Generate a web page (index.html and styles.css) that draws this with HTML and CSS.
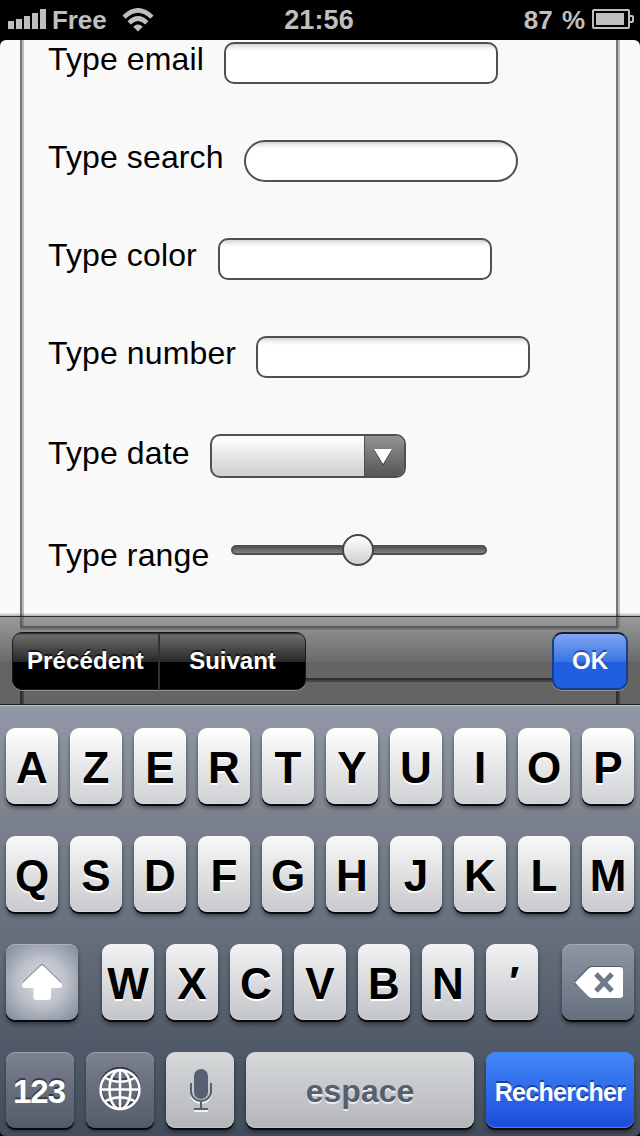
FILE: index.html
```html
<!DOCTYPE html>
<html lang="fr">
<head>
<meta charset="utf-8">
<title>Formulaire</title>
<link rel="stylesheet" href="styles.css">
</head>
<body>
<div class="phone">
  <header class="status">
    <div class="carrier">
      <svg class="signal" width="38" height="20" viewBox="0 0 38 20"><path d="M0 12h6v8H0zM8 10h6v10H8zM16 7h6v13h-6zM24 4h6v16h-6zM32 0h6v20h-6z"/></svg>
      <span class="network">Free</span>
      <svg class="wifi" width="32" height="24" viewBox="0 0 32 24"><g fill="none" stroke="#bfbfbf" stroke-width="4.6"><path d="M2 9.2Q16-4.4 30 9.2"/><path d="M7.2 14.8Q16 6.2 24.8 14.8"/></g><path d="M11.2 18.8Q16 14.4 20.8 18.8L16 23.6z"/></svg>
    </div>
    <div class="time">21:56</div>
    <div class="power"><span>87 %</span>
      <svg width="42" height="20" viewBox="0 0 42 20"><path fill="none" stroke="#bfbfbf" stroke-width="2" d="M2 1h34q1 0 1 1v16q0 1-1 1H2q-1 0-1-1V2q0-1 1-1zM37 7h3q1 0 1 1v4q0 1-1 1h-3"/><path d="M4 4h28v12H4z"/></svg>
    </div>
  </header>
  <main class="page">
    <section class="group first">
      <div class="row"><label class="w-email">Type email</label><span class="field"></span></div>
      <div class="row"><label class="w-search">Type search</label><span class="field round"></span></div>
      <div class="row"><label class="w-color">Type color</label><span class="field"></span></div>
      <div class="row"><label class="w-number">Type number</label><span class="field"></span></div>
      <div class="row date"><label class="w-date">Type date</label><span class="select"><span class="arrow"><svg width="20" height="18" viewBox="0 0 20 18"><path fill="#444" d="M1 2h18l-9 16z"/><path fill="#fff" d="M1 1h18l-9 15z"/></svg></span></span></div>
      <div class="row range"><label class="w-range">Type range</label><span class="track"><span class="thumb"></span></span></div>
    </section>
    <section class="group second"></section>
    <nav class="assist">
      <div class="segments"><span class="seg prev">Précédent</span><span class="seg next">Suivant</span></div>
      <span class="ok">OK</span>
    </nav>
  </main>
  <section class="keyboard">
    <div class="keys"><b class="key">A</b><b class="key">Z</b><b class="key">E</b><b class="key">R</b><b class="key">T</b><b class="key">Y</b><b class="key">U</b><b class="key">I</b><b class="key">O</b><b class="key">P</b></div>
    <div class="keys two"><b class="key">Q</b><b class="key">S</b><b class="key">D</b><b class="key">F</b><b class="key">G</b><b class="key">H</b><b class="key">J</b><b class="key">K</b><b class="key">L</b><b class="key">M</b></div>
    <div class="keys three">
      <b class="key shift"><svg width="42" height="38" viewBox="0 0 42 38"><path fill="#8d919b" d="M21 1Q22 1 23 2L40 18.500V22H2V18.500L19 2Q20 1 21 1z"/><path fill="#fff" d="M21 2.500Q22 2.500 23 3.500L40 20Q42 22 40.500 24 40 25 37 25H30v8.500q0 3.500-3 3.500H15.500q-3 0-3-3.500V25H5Q2 25 1.500 24 0 22 2 20L19 3.500Q20 2.500 21 2.500z"/></svg></b>
      <b class="key">W</b><b class="key">X</b><b class="key">C</b><b class="key">V</b><b class="key">B</b><b class="key">N</b><b class="key quote">′</b>
      <b class="key delete"><svg width="50" height="34" viewBox="0 0 50 34"><path fill="#555c6a" d="M1 16L14 2Q16 1 18 1H46Q49 1 49 4V20H1z"/><path fill="#fff" d="M1 17.500L14 4Q16 2 18 2H46Q49 2 49 5V30Q49 33 46 33H18Q16 33 14 31z"/><path fill="none" stroke="#70798a" stroke-width="5" d="M22 9l16 17M38 9L22 26"/></svg></b>
    </div>
    <div class="keys four">
      <b class="key dark">123</b>
      <b class="key dark globe"><svg width="42" height="44" viewBox="0 0 42 44"><g fill="none" stroke="#343b49" stroke-width="2.500"><circle cx="21" cy="20.500" r="19.500"/><path d="M7 9q14 8 28 0"/></g><g fill="none" stroke="#fff" stroke-width="2.500"><circle cx="21" cy="22.500" r="19.500"/><ellipse cx="21" cy="22.500" rx="10.500" ry="19.500"/><path d="M21 3v39M1.500 22.500h39M6.500 11q14.500 7.500 29 0M6.500 34q14.500-7.500 29 0"/></g></svg></b>
      <b class="key mic"><svg width="24" height="44" viewBox="0 0 24 44"><g transform="translate(0 2)" fill="none" stroke="#f3f3f3" stroke-width="2"><path d="M2 14v8.500a10 9.500 0 0 0 20 0V14M12 32v8M5 40h14"/></g><rect x="5" y="0" width="14" height="30" rx="7" fill="#556070"/><path fill="none" stroke="#556070" stroke-width="2" d="M2 14v8.500a10 9.500 0 0 0 20 0V14M12 32v8M5 40h14"/></svg></b>
      <b class="key space">espace</b>
      <b class="key go">Rechercher</b>
    </div>
  </section>
</div>
</body>
</html>
```
FILE: styles.css
```css
* { box-sizing: border-box; }
body { margin: 0; background: #000; font-family: "Liberation Sans", Arial, Helvetica, sans-serif; }
.phone { width: 640px; height: 1136px; overflow: hidden; background: #000; display: flex; flex-direction: column; border-radius: 0 0 5px 5px; }
svg { display: block; flex: none; }

.status { height: 40px; flex: none; display: grid; grid-template-columns: 1fr auto 1fr; color: #bfbfbf; font-weight: bold; font-size: 26px; line-height: 40px; }
.status svg { fill: #bfbfbf; }
.carrier { display: flex; padding-left: 8px; }
.signal { margin-top: 9px; }
.network { margin-left: 6px; width: 56px; letter-spacing: -.1px; }
.wifi { margin: 8px 0 0 14px; }
.time { font-size: 27px; letter-spacing: .1px; padding-right: 2px; }
.power { display: flex; justify-content: flex-end; padding-right: 6px; gap: 7px; white-space: nowrap; }
.power span { word-spacing: 2px; }
.power svg { margin-top: 9px; }

.page { height: 665px; flex: none; position: relative; overflow: hidden; background: #f9f9f9; border-radius: 6px 6px 0 0; padding: 0 20px; }
.group { border: 2px solid #757575; box-shadow: inset 2px 0 #bcbcbc, 2px 0 #bcbcbc, 0 2px #bcbcbc; width: 598px; }
.first { height: 588px; border-top: 0; padding: 2px 26px 0; }
.second { height: 60px; margin-top: 50px; box-shadow: inset 2px 2px #aaa, 2px 0 #aaa; }
.row { height: 98px; display: flex; align-items: flex-start; }
.row label { flex: none; font-size: 32px; line-height: 34px; letter-spacing: .12px; color: #000; white-space: nowrap; }
.w-email { width: 176px; }
.w-search { width: 196px; }
.w-color { width: 170px; }
.w-number { width: 208px; }
.w-date { width: 162px; }
.w-range { width: 183px; }
.field { width: 274px; height: 42px; border: 2px solid #505050; border-radius: 10px; background: linear-gradient(#d4d4d4, #f3f3f3 4px, #fff 7px); }
.round { border-radius: 21px; }
.date label { margin-top: 2px; }
.select { width: 196px; height: 44px; border: 2px solid #505050; border-radius: 10px; overflow: hidden; background: linear-gradient(#fff, #cfcfcf); display: flex; justify-content: flex-end; }
.arrow { width: 40px; border-left: 1px solid #505050; background: linear-gradient(#929292, #565656); padding: 12px 0 0 8px; }
.range label { margin-top: 6px; }
.track { width: 256px; height: 10px; margin-top: 13px; border-radius: 5px; border: 2px solid #505050; background: linear-gradient(#555, #808284); display: flex; align-items: center; justify-content: center; }
.thumb { width: 32px; height: 32px; flex: none; border: 2px solid #444; border-radius: 50%; background: linear-gradient(#fff, #d0d0d0); margin-right: 2px; }

.assist { position: absolute; left: 0; right: 0; bottom: 0; height: 92px; display: flex; justify-content: space-between; padding: 19px 12px 15px; background: linear-gradient(rgba(0,0,0,.03), rgba(0,0,0,.3) 3px, #292929 3px, #292929 4px, rgba(90,90,90,.6) 4px, rgba(12,12,12,.6) 49px, rgba(0,0,0,.6) 49px, rgba(0,0,0,.6) 91px, #222 91px); }
.segments { display: flex; width: 294px; height: 58px; border-radius: 10px; border: 1px solid #181818; background: linear-gradient(#222 0, #6b6b6b 2px, #272727 29px, #000 29px); box-shadow: 0 1px #969696; }
.seg { color: #fff; font-weight: bold; font-size: 24px; line-height: 56px; text-align: center; text-shadow: 0 -2px rgba(0,0,0,.65); }
.prev { width: 147px; letter-spacing: .1px; border-right: 2px solid #333; }
.next { flex: 1; }
.ok { width: 76px; height: 58px; border-radius: 10px; border: 2px solid #183d8c; border-top-color: #171d2d; color: #fff; font-size: 24px; line-height: 54px; font-weight: bold; text-align: center; text-shadow: 0 -2px #2450ab; background: linear-gradient(#7ea5f4, #3974e1 28px, #2060df 28px); box-shadow: 0 1px #969696; }

.keyboard { flex: 1; background: linear-gradient(#c0c5ce 0, #9299a6 2px, #7c818e 115px, #67717e 220px, #505967 340px, #434c5b); padding: 23px 6px 0; display: flex; flex-direction: column; gap: 32px; }
.keys { display: flex; justify-content: space-between; height: 76px; flex: none; }
.key { width: 52px; height: 76px; flex: none; border-radius: 9px; font-size: 44px; line-height: 79px; color: #000; text-align: center; text-shadow: 0 2px #fff; background: linear-gradient(#fff, #cfd0d3); box-shadow: 0 2px 0 #080a0d, 0 4px 4px rgba(0,0,0,.45), inset 0 -1px rgba(255,255,255,.25); display: flex; justify-content: center; }
.two .key { background: linear-gradient(#f8f8f9, #c9cacd); }
.three, .four { justify-content: flex-start; gap: 12px; }
.three .key { background: linear-gradient(#f1f2f3, #c4c5c9); }
.three .key.shift { width: 72px; margin-right: 12px; padding-top: 19px; background: radial-gradient(circle at 50% 50%, #dadce0 0, #bdc1c9 24px, #8f98a7 44px, #7c8796 52px); box-shadow: 0 2px 0 #080a0d, 0 4px 4px rgba(0,0,0,.45), inset 0 1px #acb2bf; }
.three .key.delete { width: 72px; margin-left: 12px; padding: 21px 0 0 1px; background: linear-gradient(#8f95a1, #667080); box-shadow: 0 2px 0 #080a0d, 0 4px 4px rgba(0,0,0,.45), inset 0 1px #a4aab5; }
.key.quote { font-size: 42px; line-height: 75px; font-style: italic; }
.key.dark { width: 68px; color: #fff; font-size: 33px; line-height: 79px; letter-spacing: -1px; padding-right: 2px; text-shadow: 0 -2px #343b49; background: linear-gradient(#7b818d, #535b69); box-shadow: 0 2px 0 #080a0d, 0 3px 3px rgba(0,0,0,.4), inset 0 1px #9a9fa9; }
.key.globe { padding: 15px 0 0; }
.key.mic { width: 68px; padding: 17px 0 0 1px; background: linear-gradient(#d6d9da, #b5b6ba); }
.key.space { width: 228px; color: #55606e; font-size: 32px; line-height: 79px; background: linear-gradient(#d6d9da, #b5b6ba); text-shadow: 0 2px #ececee; }
.key.go { width: 148px; color: #fff; font-size: 25px; letter-spacing: -.7px; line-height: 80px; background: linear-gradient(#4388f7, #1b4ddb); text-shadow: 0 -2px #1c419b; }
```
